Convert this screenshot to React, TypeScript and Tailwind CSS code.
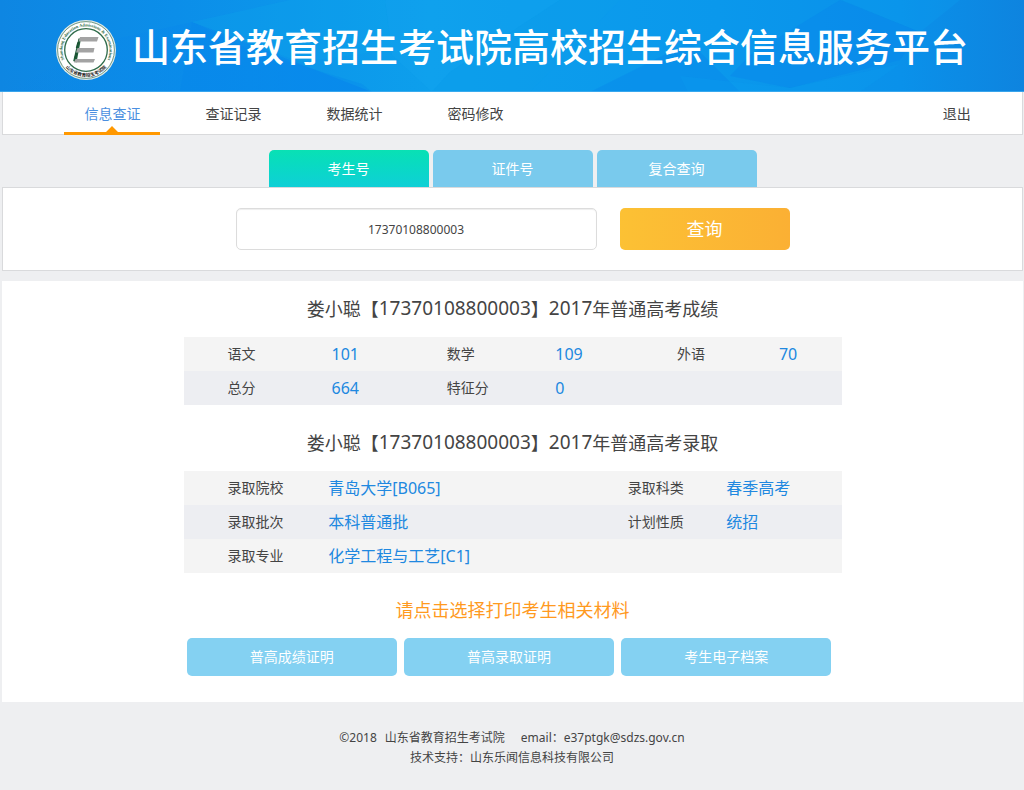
import { useState } from "react";
import type { FormEvent } from "react";

type Cell = { label: string; value: string };

const navItems = ["信息查证", "查证记录", "数据统计", "密码修改"];
const searchTabs = ["考生号", "证件号", "复合查询"];
const printActions = ["普高成绩证明", "普高录取证明", "考生电子档案"];

const scoreRows: Cell[][] = [
  [
    { label: "语文", value: "101" },
    { label: "数学", value: "109" },
    { label: "外语", value: "70" },
  ],
  [
    { label: "总分", value: "664" },
    { label: "特征分", value: "0" },
  ],
];

const admissionRows: Cell[][] = [
  [
    { label: "录取院校", value: "青岛大学[B065]" },
    { label: "录取科类", value: "春季高考" },
  ],
  [
    { label: "录取批次", value: "本科普通批" },
    { label: "计划性质", value: "统招" },
  ],
  [{ label: "录取专业", value: "化学工程与工艺[C1]" }],
];

export default function App() {
  return (
    <div className="min-h-screen bg-[#eeeff1] font-['Noto_Sans','Noto_Sans_CJK_SC',sans-serif] text-sm text-[#444]">
      <Header />
      <MainNav />
      <SearchPanel />
      <main className="mr-px ml-0.5 mt-2.5 bg-white px-4 pb-[26px]">
        <div className="mx-auto max-w-[658px]">
          <ResultTitle suffix="成绩" />
          <DataTable
            columns={["w-[22.5%]", "w-[17.5%]", "w-[16.5%]", "w-[18.5%]", "w-[15.5%]", "w-[9.5%]"]}
            rows={scoreRows}
          />
          <div className="mt-2.5">
            <ResultTitle suffix="录取" />
          </div>
          <DataTable
            columns={["w-[22%]", "w-[45.5%]", "w-[15%]", "w-[17.5%]"]}
            rows={admissionRows}
          />
          <h2 className="mt-[9px] flex h-14 items-center justify-center text-lg text-[#ff9a1f]">
            请点击选择打印考生相关材料
          </h2>
          <div className="flex gap-[7px] pl-[3px] pr-2.5">
            {printActions.map((action) => (
              <button
                className="h-[38px] flex-1 rounded-[5px] bg-[#84d1f2] text-white hover:bg-[#6fc6ec]"
                key={action}
                type="button"
              >
                {action}
              </button>
            ))}
          </div>
        </div>
      </main>
      <footer className="pt-[26px] pb-6 text-center text-xs leading-5">
        <p className="flex justify-center">
          <span>©2018</span>
          <span className="ml-2">山东省教育招生考试院</span>
          <span className="ml-4">email：e37ptgk@sdzs.gov.cn</span>
        </p>
        <p>技术支持：山东乐闻信息科技有限公司</p>
      </footer>
    </div>
  );
}

function Header() {
  return (
    <header className="relative h-[92px] overflow-hidden bg-[#0b93ea]">
      <HeaderBackdrop />
      <div className="relative flex h-full items-center justify-center gap-4 pt-2">
        <Emblem />
        <h1 className="pb-2 text-[38px] leading-none font-medium whitespace-nowrap text-white">
          山东省教育招生考试院高校招生综合信息服务平台
        </h1>
      </div>
    </header>
  );
}

function HeaderBackdrop() {
  return (
    <svg
      aria-hidden="true"
      className="absolute inset-0 h-full w-full"
      preserveAspectRatio="none"
      viewBox="0 0 1024 92"
    >
      <defs>
        <linearGradient id="sky" x1="0" x2="1" y1="0" y2="0">
          <stop offset="0" stopColor="#0e86e2" />
          <stop offset="0.17" stopColor="#0b8ee9" />
          <stop offset="0.42" stopColor="#0d9fec" />
          <stop offset="0.7" stopColor="#0a98ec" />
          <stop offset="0.88" stopColor="#0a91ea" />
          <stop offset="1" stopColor="#0e84df" />
        </linearGradient>
        <linearGradient id="facet" x1="0" x2="1" y1="0" y2="0">
          <stop offset="0" stopColor="#0784ec" stopOpacity="0" />
          <stop offset="1" stopColor="#0784ec" stopOpacity="0.6" />
        </linearGradient>
      </defs>
      <rect fill="url(#sky)" height="92" width="1024" />
      <path d="M0 92L110 40L192 22L372 92Z" fill="url(#facet)" />
      <path d="M192 22L250 50L362 84L372 92H180Z" fill="#0784ec" opacity="0.3" />
      <path d="M192 22L290 0H385L392 50L300 62Z" fill="#0ea5ec" opacity="0.3" />
      <path d="M385 0H560L450 72L432 92L392 55Z" fill="#13a7ee" opacity="0.3" />
      <path d="M560 0H620L530 92H432L450 72Z" fill="#0d9eea" opacity="0.4" />
      <path d="M590 92L690 42L740 92Z" fill="#0784ec" opacity="0.4" />
      <path d="M840 0L920 32L900 60L790 88L730 76L750 55Z" fill="#0784ec" opacity="0.4" />
      <path d="M842 0H960L920 32Z" fill="#0ca0ee" opacity="0.3" />
      <path d="M680 76L790 88L900 64L860 92H688Z" fill="#0aa0ee" opacity="0.25" />
      <rect fill="#4bb0f0" height="1" opacity="0.7" width="1024" y="91" />
    </svg>
  );
}

function Emblem() {
  return (
    <svg
      aria-label="山东省教育招生考试院"
      className="h-[60px] w-[60px] shrink-0"
      role="img"
      viewBox="0 0 60 60"
    >
      <defs>
        <path d="M9.3 41.4A23.6 23.6 0 1 1 50.7 41.4" id="ring-top" />
        <path d="M6.8 43.4A26.8 26.8 0 0 0 53.2 43.4" id="ring-bottom" />
      </defs>
      <circle cx="30" cy="30" fill="#dfe9e6" r="30" />
      <circle cx="30" cy="30" fill="#fff" r="28.4" stroke="#4d8068" strokeWidth="0.8" />
      <circle cx="30" cy="30" fill="#fff" r="21.3" stroke="#2e6b4a" strokeWidth="1.3" />
      <text
        className="font-['Liberation_Serif',serif] font-bold"
        fill="#2e6b4a"
        fontSize="4.4"
        textAnchor="middle"
      >
        <textPath href="#ring-top" startOffset="50%">
          Shandong Education Admissions &amp; Examinations
        </textPath>
      </text>
      <text fill="#222" fontSize="4.6" fontWeight="700" textAnchor="middle">
        <textPath href="#ring-bottom" startOffset="50%">
          山东省教育招生考试院
        </textPath>
      </text>
      <path d="M22.5 18.5L17.2 41L20.5 42.5L25 18.5Z" fill="#1f5f3a" />
      <path
        d="M24 17H42.5L41 21.5H22.5ZM21.5 28H38.5L37.5 32.5H20ZM19.5 39H39L37.5 42.5H18Z"
        fill="#a3a3a3"
      />
      <path d="M21.2 22.5L23.4 21.5L21.5 28H19.8ZM19.5 33H21.2L20 38.5H18.2Z" fill="#1a5232" />
    </svg>
  );
}

function MainNav() {
  return (
    <nav className="mr-px ml-0.5 flex h-[43px] items-center justify-between border-x border-b border-[#d9dadc] bg-white pr-[5%] pl-[6%]">
      <ul className="flex gap-[25px]">
        {navItems.map((item, index) => (
          <li className="relative w-24 text-center" key={item}>
            <a
              aria-current={index === 0 ? "page" : undefined}
              className={
                index === 0
                  ? "block leading-[43px] text-[#4a8fe0]"
                  : "block leading-[43px] hover:text-[#4a8fe0]"
              }
              href="#"
            >
              {item}
            </a>
            {index === 0 ? (
              <svg
                aria-hidden="true"
                className="absolute bottom-0 left-0 h-[9px] w-full"
                fill="#ff9800"
                viewBox="0 0 96 9"
              >
                <path d="M0 6H42L48 0L54 6H96V9H0Z" />
              </svg>
            ) : null}
          </li>
        ))}
      </ul>
      <a className="leading-[43px] hover:text-[#4a8fe0]" href="#">
        退出
      </a>
    </nav>
  );
}

function SearchPanel() {
  const [activeTab, setActiveTab] = useState(searchTabs[0]);
  const [keyword, setKeyword] = useState("17370108800003");

  function handleSubmit(event: FormEvent) {
    event.preventDefault();
  }

  return (
    <section className="mr-px ml-0.5 pt-[15px]">
      <div className="flex justify-center gap-1" role="tablist">
        {searchTabs.map((tab) => (
          <button
            aria-selected={tab === activeTab}
            className={
              tab === activeTab
                ? "h-[37px] w-40 rounded-t-[5px] bg-linear-to-b from-[#09e1b4] to-[#10cfd6] text-white"
                : "h-[37px] w-40 rounded-t-[5px] bg-[#79caed] text-white"
            }
            key={tab}
            onClick={() => setActiveTab(tab)}
            role="tab"
            type="button"
          >
            {tab}
          </button>
        ))}
      </div>
      <form
        className="flex justify-center gap-[23px] border border-[#d9dadc] bg-white py-5"
        onSubmit={handleSubmit}
      >
        <input
          aria-label={activeTab}
          className="h-[42px] w-[361px] rounded-[5px] border border-[#dcdcdc] bg-white text-center text-xs shadow-[inset_0_1px_1px_#eee] outline-none"
          onChange={(event) => setKeyword(event.target.value)}
          type="text"
          value={keyword}
        />
        <button
          className="h-[42px] w-[170px] rounded-[5px] bg-linear-to-r from-[#fcc134] to-[#fbb034] text-lg text-white"
          type="submit"
        >
          查询
        </button>
      </form>
    </section>
  );
}

function ResultTitle({ suffix }: { suffix: string }) {
  return (
    <h2 className="flex h-14 items-center justify-center text-lg">
      <span>娄小聪【</span>
      <span className="text-[19px]">17370108800003</span>
      <span>】</span>
      <span className="text-[19px]">2017</span>
      <span>年普通高考{suffix}</span>
    </h2>
  );
}

function DataTable({ columns, rows }: { columns: string[]; rows: Cell[][] }) {
  return (
    <table className="w-full table-fixed text-left">
      <colgroup>
        {columns.map((width, index) => (
          <col className={width} key={index} />
        ))}
      </colgroup>
      <tbody>
        {rows.map((row, rowIndex) => {
          const emptyColumns = columns.length - row.length * 2;

          return (
            <tr className="h-[34px] odd:bg-[#f4f4f4] even:bg-[#edeef2]" key={rowIndex}>
              {row.map((cell) => (
                <DataCell cell={cell} key={cell.label} />
              ))}
              {emptyColumns > 0 ? <td colSpan={emptyColumns} /> : null}
            </tr>
          );
        })}
      </tbody>
    </table>
  );
}

function DataCell({ cell }: { cell: Cell }) {
  return (
    <>
      <th className="p-0 font-normal whitespace-nowrap first:pl-11" scope="row">
        {cell.label}
      </th>
      <td className="p-0 text-base whitespace-nowrap text-[#2088e0]">{cell.value}</td>
    </>
  );
}
